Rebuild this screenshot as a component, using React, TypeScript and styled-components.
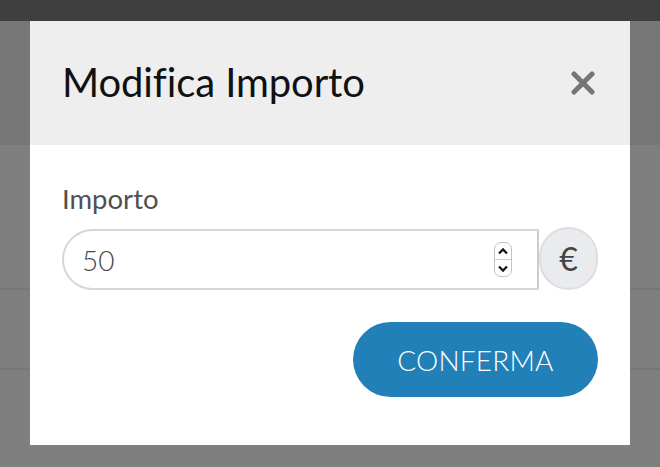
import React from "react";
import styled, { createGlobalStyle } from "styled-components";

const Global = createGlobalStyle`
  html, body { margin: 0; padding: 0; }
  body { font-family: Lato, "Open Sans", sans-serif; background: #ffffff; overflow: hidden; }
  * { box-sizing: border-box; }
`;

const Page = styled.div`
  width: 660px;
  height: 467px;
  display: flex;
  flex-direction: column;
  background: #ffffff;
`;

const TopBar = styled.div`
  height: 21px;
  background: #7e7e7e;
`;

const Band = styled.div`
  height: 124px;
  background: #eeeeee;
`;

const Row = styled.div<{ $h: number }>`
  height: ${(p) => p.$h}px;
  border-bottom: 2px solid #eeeeee;
`;

const Overlay = styled.div`
  position: fixed;
  inset: 0;
  background: rgba(0, 0, 0, 0.5);
  display: flex;
  align-items: flex-start;
  justify-content: center;
  padding-top: 21px;
`;

const Modal = styled.div`
  width: 600px;
  height: 424px;
  background: #ffffff;
  display: flex;
  flex-direction: column;
`;

const Header = styled.div`
  height: 124px;
  background: #eeeeee;
  display: flex;
  align-items: center;
  justify-content: space-between;
  padding: 0 34px 0 32px;
`;

const Title = styled.h2`
  margin: 0;
  font-family: Lato, sans-serif;
  font-weight: 400;
  font-size: 40px;
  color: #111111;
  letter-spacing: -0.1px;
  padding-bottom: 2px;
`;

const Close = styled.button`
  border: 0;
  background: transparent;
  padding: 0;
  width: 26px;
  height: 26px;
  display: flex;
  align-items: center;
  justify-content: center;
  cursor: pointer;
`;

const Body = styled.div`
  padding: 38px 32px 0 32px;
  display: flex;
  flex-direction: column;
`;

const Label = styled.label`
  font-family: Lato, sans-serif;
  font-size: 27.5px;
  color: #505050;
  line-height: 32px;
  margin-bottom: 14px;
`;

const Group = styled.div`
  display: flex;
  align-items: center;
`;

const Field = styled.div`
  flex: 1;
  height: 61px;
  border: 2px solid #d6d6d6;
  border-right: 2px solid #cccccc;
  border-radius: 31px 0 0 31px;
  display: flex;
  align-items: center;
  padding: 0 25px 0 18px;
`;

const Value = styled.span`
  flex: 1;
  font-family: Lato, sans-serif;
  font-size: 28px;
  color: #484848;
  font-weight: 300;
`;

const Spinner = styled.div`
  width: 18px;
  height: 35px;
  border: 1px solid #c4c4c4;
  border-radius: 7px;
  display: flex;
  flex-direction: column;
  overflow: hidden;
`;

const SpinHalf = styled.div<{ $top?: boolean }>`
  flex: 1;
  display: flex;
  align-items: center;
  justify-content: center;
  border-bottom: ${(p) => (p.$top ? "1px solid #cfcfcf" : "0")};
`;

const Addon = styled.div`
  width: 59px;
  height: 63px;
  margin-top: -3px;
  border: 2px solid #dedede;
  border-radius: 30px;
  background: #e9ebee;
  display: flex;
  align-items: center;
  justify-content: center;
  font-family: Lato, sans-serif;
  font-size: 32px;
  font-weight: 400;
  color: #444444;
`;

const Actions = styled.div`
  display: flex;
  justify-content: flex-end;
  margin-top: 32px;
`;

const Confirm = styled.button`
  width: 245px;
  height: 75px;
  border: 0;
  border-radius: 38px;
  background: #2180b8;
  color: #ffffff;
  font-family: Lato, sans-serif;
  font-size: 28px;
  font-weight: 300;
  letter-spacing: 0.2px;
  cursor: pointer;
`;

export default function App() {
  return (
    <>
      <Global />
      <Page>
        <TopBar />
        <Band />
        <Row $h={145} />
        <Row $h={80} />
      </Page>
      <Overlay>
        <Modal>
          <Header>
            <Title>Modifica Importo</Title>
            <Close aria-label="Chiudi">
              <svg width="24" height="24" viewBox="0 0 24 24">
                <path d="M3 3 L21 21 M21 3 L3 21" stroke="#767676" strokeWidth="5" strokeLinecap="round" />
              </svg>
            </Close>
          </Header>
          <Body>
            <Label>Importo</Label>
            <Group>
              <Field>
                <Value>50</Value>
                <Spinner>
                  <SpinHalf $top>
                    <svg width="12" height="9" viewBox="0 0 12 9">
                      <path d="M2 6.5 L6 2.5 L10 6.5" stroke="#1a1a1a" strokeWidth="2.4" fill="none" />
                    </svg>
                  </SpinHalf>
                  <SpinHalf>
                    <svg width="12" height="9" viewBox="0 0 12 9">
                      <path d="M2 2.5 L6 6.5 L10 2.5" stroke="#1a1a1a" strokeWidth="2.4" fill="none" />
                    </svg>
                  </SpinHalf>
                </Spinner>
              </Field>
              <Addon>€</Addon>
            </Group>
            <Actions>
              <Confirm>CONFERMA</Confirm>
            </Actions>
          </Body>
        </Modal>
      </Overlay>
    </>
  );
}
